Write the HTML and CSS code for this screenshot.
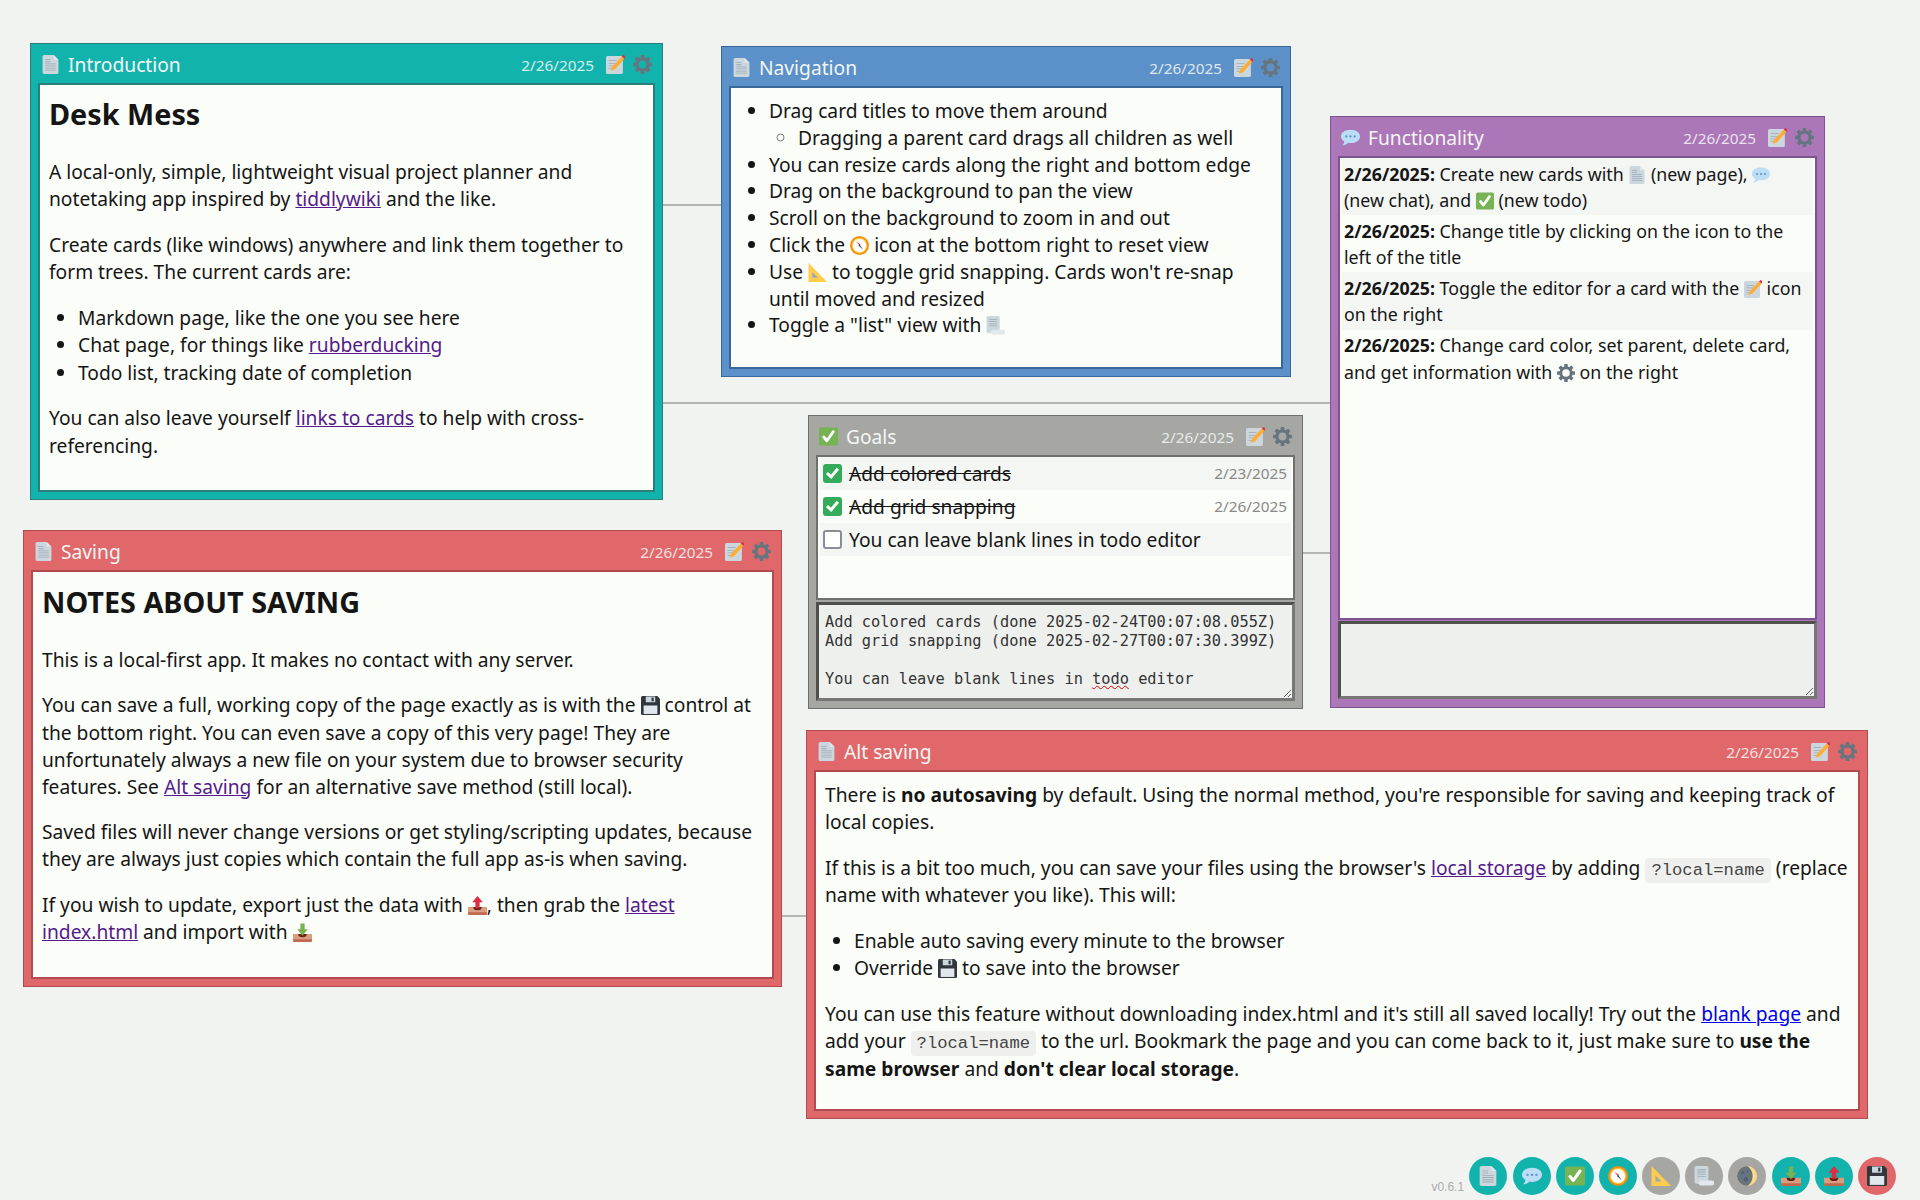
FILE: index.html
```html
<!DOCTYPE html>
<html lang="en">
<head>
  <meta charset="UTF-8" />
  <meta name="viewport" content="width=device-width, initial-scale=1.0"/>
  <title>Desk Mess</title>
  <link rel="stylesheet" href="styles.css">
</head>
<body>
  <svg class="defs" width="0" height="0" aria-hidden="true">
    <symbol id="i-page" viewBox="0 0 36 36">
      <path fill="#ccd6dd" d="M6 0h18l9 9v24a3 3 0 0 1-3 3H6a3 3 0 0 1-3-3V3a3 3 0 0 1 3-3z"/>
      <path fill="#e1e8ed" d="M24 0l9 9h-7a2 2 0 0 1-2-2z"/>
      <path fill="#99aab5" d="M8 12h10v1.500H8zM8 16h20v1.500H8zM8 20h20v1.500H8zM8 24h20v1.500H8zM8 28h20v1.500H8zM8 8h10v1.500H8z"/>
    </symbol>
    <symbol id="i-chat" viewBox="1 1 34 34">
      <path fill="#bbddf5" d="M18 4C8 4 1 9 1 16c0 4 2.500 7 6 9-.5 3-2 5.500-4 7 4 .5 8-1.500 11-4.500 1.300.3 2.600.5 4 .5 10 0 17-5 17-12S28 4 18 4z"/>
      <circle fill="#5b93c9" cx="10.500" cy="16" r="2"/><circle fill="#5b93c9" cx="18" cy="16" r="2"/><circle fill="#5b93c9" cx="25.500" cy="16" r="2"/>
    </symbol>
    <symbol id="i-check" viewBox="0 0 36 36">
      <rect fill="#77b255" y="1" width="36" height="34" rx="3"/>
      <path fill="none" stroke="#fff" stroke-width="5.500" stroke-linecap="round" stroke-linejoin="round" d="M9 19l6 7L27 9"/>
    </symbol>
    <symbol id="i-compass" viewBox="0 0 36 36">
      <circle fill="#f4900c" cx="18" cy="18" r="18"/>
      <circle fill="#ffcc4d" cx="18" cy="18" r="14.500"/>
      <circle fill="#fff" cx="18" cy="18" r="12.500"/>
      <path fill="#dd2e44" d="M11 10l9 6-2 2z"/>
      <path fill="#31373d" d="M25 26l-9-8 2-2z"/>
    </symbol>
    <symbol id="i-ruler" viewBox="0 0 36 36">
      <path fill="#ffcc4d" d="M1 0v36h35z"/>
      <path fill="#99aab5" d="M8 17v11h11z"/>
    </symbol>
    <symbol id="i-scroll" viewBox="0 0 36 36">
      <path fill="#ccd6dd" d="M1 3a3 3 0 0 1 3-3h19a3 3 0 0 1 3 3v29H4a3 3 0 0 1-3-3z"/>
      <path fill="#e1e8ed" d="M11 26h21a4.500 4.500 0 0 1 0 9H12a5 5 0 0 1-4-4z"/>
      <path fill="#99aab5" d="M6 6h15v1.500H6zM6 10h15v1.500H6zM6 14h15v1.500H6zM6 18h15v1.500H6z"/>
    </symbol>
    <symbol id="i-moon" viewBox="0 0 36 36">
      <circle fill="#ffd983" cx="18" cy="18" r="18"/>
      <path fill="#66757f" d="M18 0a18 18 0 0 0 0 36c6-3 10-10 10-18S24 3 18 0z"/>
      <circle fill="#55606e" cx="10" cy="12" r="3"/><circle fill="#55606e" cx="16" cy="24" r="4"/><circle fill="#55606e" cx="19" cy="10" r="2"/>
    </symbol>
    <symbol id="i-import" viewBox="0 0 36 36">
      <path fill="#d99e82" d="M0 21h36v12a3 3 0 0 1-3 3H3a3 3 0 0 1-3-3z"/>
      <path fill="#c1694f" d="M0 31h36v2a3 3 0 0 1-3 3H3a3 3 0 0 1-3-3z"/>
      <path fill="#662113" d="M10 21h16a8 6 0 0 1-16 0z"/>
      <path fill="#77b255" d="M14 1h8v11h6L18 24 8 12h6z"/>
    </symbol>
    <symbol id="i-export" viewBox="0 0 36 36">
      <path fill="#d99e82" d="M0 21h36v12a3 3 0 0 1-3 3H3a3 3 0 0 1-3-3z"/>
      <path fill="#c1694f" d="M0 31h36v2a3 3 0 0 1-3 3H3a3 3 0 0 1-3-3z"/>
      <path fill="#662113" d="M10 21h16a8 6 0 0 1-16 0z"/>
      <path fill="#dd2e44" d="M18 0l10 12h-6v11h-8V12H8z"/>
    </symbol>
    <symbol id="i-save" viewBox="0 0 36 36">
      <path fill="#31373d" d="M3 0h28l5 5v28a3 3 0 0 1-3 3H3a3 3 0 0 1-3-3V3a3 3 0 0 1 3-3z"/>
      <rect fill="#ccd6dd" x="9" y="1" width="18" height="11" rx="1"/>
      <rect fill="#31373d" x="20" y="3" width="4" height="7"/>
      <rect fill="#e1e8ed" x="5" y="18" width="26" height="16"/>
    </symbol>
    <symbol id="i-memo" viewBox="0 0 36 36">
      <rect fill="#ccd6dd" x="0" y="2" width="32" height="34" rx="3"/>
      <path fill="#99aab5" d="M5 10h15v1.500H5zM5 15h15v1.500H5zM5 20h10v1.500H5zM5 25h6v1.500H5z"/>
      <path fill="#ffac33" d="M30 3l5 4-18 20-8 3 3-8z"/>
      <path fill="#dd2e44" d="M30 3l2-2a2 2 0 0 1 3 0l1 2a2 2 0 0 1 0 2l-1 2z"/>
    </symbol>
    <symbol id="i-gear" viewBox="0 0 36 36">
      <circle cx="18" cy="18" r="10.500" fill="none" stroke="#66757f" stroke-width="6"/>
      <g fill="#66757f">
        <rect x="14.500" y="0" width="7" height="8" rx="1"/>
        <rect x="14.500" y="28" width="7" height="8" rx="1"/>
        <rect x="0" y="14.500" width="8" height="7" rx="1"/>
        <rect x="28" y="14.500" width="8" height="7" rx="1"/>
        <rect x="14.500" y="0" width="7" height="8" rx="1" transform="rotate(45 18 18)"/>
        <rect x="14.500" y="28" width="7" height="8" rx="1" transform="rotate(45 18 18)"/>
        <rect x="0" y="14.500" width="8" height="7" rx="1" transform="rotate(45 18 18)"/>
        <rect x="28" y="14.500" width="8" height="7" rx="1" transform="rotate(45 18 18)"/>
      </g>
    </symbol>
  </svg>

  <div class="canvas">
    <div class="link link-intro-nav"></div>
    <div class="link link-intro-func"></div>
    <div class="link link-goals-func"></div>
    <div class="link link-saving-alt"></div>

    <section class="card card-teal card-intro">
      <header class="card-head">
        <svg class="head-icon"><use href="#i-page"/></svg>
        <span class="card-title">Introduction</span>
        <span class="card-date">2/26/2025</span>
        <svg class="head-btn"><use href="#i-memo"/></svg>
        <svg class="head-btn"><use href="#i-gear"/></svg>
      </header>
      <div class="card-body">
        <h1>Desk Mess</h1>
        <p>A local-only, simple, lightweight visual project planner and notetaking app inspired by <a href="#">tiddlywiki</a> and the like.</p>
        <p>Create cards (like windows) anywhere and link them together to form trees. The current cards are:</p>
        <ul>
          <li>Markdown page, like the one you see here</li>
          <li>Chat page, for things like <a href="#">rubberducking</a></li>
          <li>Todo list, tracking date of completion</li>
        </ul>
        <p>You can also leave yourself <a href="#">links to cards</a> to help with cross-referencing.</p>
      </div>
    </section>

    <section class="card card-blue card-nav">
      <header class="card-head">
        <svg class="head-icon"><use href="#i-page"/></svg>
        <span class="card-title">Navigation</span>
        <span class="card-date">2/26/2025</span>
        <svg class="head-btn"><use href="#i-memo"/></svg>
        <svg class="head-btn"><use href="#i-gear"/></svg>
      </header>
      <div class="card-body">
        <ul>
          <li>Drag card titles to move them around
            <ul><li>Dragging a parent card drags all children as well</li></ul>
          </li>
          <li>You can resize cards along the right and bottom edge</li>
          <li>Drag on the background to pan the view</li>
          <li>Scroll on the background to zoom in and out</li>
          <li>Click the <svg class="emoji"><use href="#i-compass"/></svg> icon at the bottom right to reset view</li>
          <li>Use <svg class="emoji"><use href="#i-ruler"/></svg> to toggle grid snapping. Cards won't re-snap until moved and resized</li>
          <li>Toggle a "list" view with <svg class="emoji"><use href="#i-scroll"/></svg></li>
        </ul>
      </div>
    </section>

    <section class="card card-purple card-func">
      <header class="card-head">
        <svg class="head-icon"><use href="#i-chat"/></svg>
        <span class="card-title">Functionality</span>
        <span class="card-date">2/26/2025</span>
        <svg class="head-btn"><use href="#i-memo"/></svg>
        <svg class="head-btn"><use href="#i-gear"/></svg>
      </header>
      <div class="card-body card-list">
        <div class="chat-row"><b>2/26/2025:</b> Create new cards with <svg class="emoji"><use href="#i-page"/></svg> (new page), <svg class="emoji"><use href="#i-chat"/></svg> (new chat), and <svg class="emoji"><use href="#i-check"/></svg> (new todo)</div>
        <div class="chat-row"><b>2/26/2025:</b> Change title by clicking on the icon to the left of the title</div>
        <div class="chat-row"><b>2/26/2025:</b> Toggle the editor for a card with the <svg class="emoji"><use href="#i-memo"/></svg> icon on the right</div>
        <div class="chat-row"><b>2/26/2025:</b> Change card color, set parent, delete card, and get information with <svg class="emoji"><use href="#i-gear"/></svg> on the right</div>
      </div>
      <textarea class="editor chat-input"></textarea>
    </section>

    <section class="card card-grey card-goals">
      <header class="card-head">
        <svg class="head-icon"><use href="#i-check"/></svg>
        <span class="card-title">Goals</span>
        <span class="card-date">2/26/2025</span>
        <svg class="head-btn"><use href="#i-memo"/></svg>
        <svg class="head-btn"><use href="#i-gear"/></svg>
      </header>
      <div class="card-body card-list">
        <label class="todo-row"><input type="checkbox" checked><s>Add colored cards</s><span class="todo-date">2/23/2025</span></label>
        <label class="todo-row"><input type="checkbox" checked><s>Add grid snapping</s><span class="todo-date">2/26/2025</span></label>
        <label class="todo-row"><input type="checkbox"><span>You can leave blank lines in todo editor</span></label>
      </div>
      <div class="editor todo-editor">Add colored cards (done 2025-02-24T00:07:08.055Z)
Add grid snapping (done 2025-02-27T00:07:30.399Z)

You can leave blank lines in <span class="typo">todo</span> editor</div>
    </section>

    <section class="card card-red card-saving">
      <header class="card-head">
        <svg class="head-icon"><use href="#i-page"/></svg>
        <span class="card-title">Saving</span>
        <span class="card-date">2/26/2025</span>
        <svg class="head-btn"><use href="#i-memo"/></svg>
        <svg class="head-btn"><use href="#i-gear"/></svg>
      </header>
      <div class="card-body">
        <h1>NOTES ABOUT SAVING</h1>
        <p>This is a local-first app. It makes no contact with any server.</p>
        <p>You can save a full, working copy of the page exactly as is with the <svg class="emoji"><use href="#i-save"/></svg> control at the bottom right. You can even save a copy of this very page! They are unfortunately always a new file on your system due to browser security features. See <a href="#">Alt saving</a> for an alternative save method (still local).</p>
        <p>Saved files will never change versions or get styling/scripting updates, because they are always just copies which contain the full app as-is when saving.</p>
        <p>If you wish to update, export just the data with <svg class="emoji"><use href="#i-export"/></svg>, then grab the <a href="#">latest index.html</a> and import with <svg class="emoji"><use href="#i-import"/></svg></p>
      </div>
    </section>

    <section class="card card-red card-alt">
      <header class="card-head">
        <svg class="head-icon"><use href="#i-page"/></svg>
        <span class="card-title">Alt saving</span>
        <span class="card-date">2/26/2025</span>
        <svg class="head-btn"><use href="#i-memo"/></svg>
        <svg class="head-btn"><use href="#i-gear"/></svg>
      </header>
      <div class="card-body">
        <p>There is <b>no autosaving</b> by default. Using the normal method, you're responsible for saving and keeping track of local copies.</p>
        <p>If this is a bit too much, you can save your files using the browser's <a href="#">local storage</a> by adding <code>?local=name</code> (replace name with whatever you like). This will:</p>
        <ul>
          <li>Enable auto saving every minute to the browser</li>
          <li>Override <svg class="emoji"><use href="#i-save"/></svg> to save into the browser</li>
        </ul>
        <p>You can use this feature without downloading index.html and it's still all saved locally! Try out the <a class="fresh" href="#">blank page</a> and add your <code>?local=name</code> to the url. Bookmark the page and you can come back to it, just make sure to <b>use the same browser</b> and <b>don't clear local storage</b>.</p>
      </div>
    </section>

    <footer class="toolbar">
      <span class="version">v0.6.1</span>
      <button class="tool"><svg><use href="#i-page"/></svg></button>
      <button class="tool"><svg><use href="#i-chat"/></svg></button>
      <button class="tool"><svg><use href="#i-check"/></svg></button>
      <button class="tool"><svg><use href="#i-compass"/></svg></button>
      <button class="tool tool-off"><svg><use href="#i-ruler"/></svg></button>
      <button class="tool tool-off"><svg><use href="#i-scroll"/></svg></button>
      <button class="tool tool-off"><svg><use href="#i-moon"/></svg></button>
      <button class="tool"><svg><use href="#i-import"/></svg></button>
      <button class="tool"><svg><use href="#i-export"/></svg></button>
      <button class="tool tool-save"><svg><use href="#i-save"/></svg></button>
    </footer>
  </div>
</body>
</html>
```

FILE: styles.css
```css
html, body {
  margin: 0;
  height: 100%;
}
body {
  font-family: "Noto Sans", sans-serif;
  font-size: 19.22px;
  line-height: 27.3px;
  color: #151515;
  background: #f1f3f1;
  overflow: hidden;
}
.defs {
  position: absolute;
}
.canvas {
  position: relative;
  width: 1920px;
  height: 1200px;
}

/* lines between parent and child cards */
.link {
  position: absolute;
  height: 2px;
  background: #b5b6b3;
}
.link-intro-nav { left: 663px; top: 204px; width: 60px; }
.link-intro-func { left: 663px; top: 402px; width: 670px; }
.link-goals-func { left: 1303px; top: 552px; width: 30px; }
.link-saving-alt { left: 782px; top: 915px; width: 26px; }

/* cards sit on a free canvas */
.card {
  position: absolute;
  box-sizing: border-box;
  display: flex;
  flex-direction: column;
  padding: 0 7px 7px;
  border: 1px solid var(--edge);
  background: var(--fill);
}
.card-teal { --fill: #12b3ac; --edge: #2b7f7b; }
.card-blue { --fill: #5b91c8; --edge: #38689b; }
.card-purple { --fill: #ab77b8; --edge: #7c5490; }
.card-grey { --fill: #a6a7a3; --edge: #6f706d; }
.card-red { --fill: #e0686b; --edge: #ae4c4f; }

.card-intro { left: 30px; top: 43px; width: 633px; height: 457px; }
.card-nav { left: 721px; top: 46px; width: 570px; height: 331px; }
.card-func { left: 1330px; top: 116px; width: 495px; height: 592px; }
.card-goals { left: 808px; top: 415px; width: 495px; height: 294px; }
.card-saving { left: 23px; top: 530px; width: 759px; height: 457px; }
.card-alt { left: 806px; top: 730px; width: 1062px; height: 389px; }

.card-head {
  flex: none;
  box-sizing: border-box;
  height: 39px;
  display: flex;
  align-items: center;
  gap: 8px;
  padding: 2px 3px 0;
  color: #f4f6f4;
}
.head-icon {
  width: 19px;
  height: 19px;
}
.card-title {
  flex: 1;
}
.card-date {
  font-size: 15.3px;
  opacity: 0.85;
  margin: 2px 4px 0 0;
}
.head-btn {
  width: 19px;
  height: 19px;
}

.card-body {
  box-sizing: border-box;
  flex: 1;
  min-height: 0;
  overflow: hidden;
  padding: 0 9px;
  background: #fbfdf8;
  border: 2px solid var(--edge);
}
.card-body h1 {
  font-size: 28.8px;
  line-height: 38px;
  margin: 10px 0 25px;
}
.card-body p {
  margin: 18.400px 0;
}
.card-body ul {
  margin: 18.400px 0;
  padding-left: 29px;
}
.card-body li ul {
  margin: 0;
}
.card-body li li::marker {
  color: #777;
}
.card-nav .card-body {
  padding-top: 10px;
  line-height: 26.8px;
}
.card-nav .card-body > ul {
  margin: 0;
}
.card-alt .card-body p:first-child {
  margin-top: 9px;
}
.card-saving .card-body {
  line-height: 27.1px;
}
.card-saving .card-body h1 {
  margin-top: 11px;
}
a {
  color: #551a8b;
}
a.fresh {
  color: #0000ee;
}
code {
  font-family: "Liberation Mono", monospace;
  font-size: 17.2px;
  line-height: 1;
  padding: 3px 6px;
  border-radius: 4px;
  color: #444;
  background: #eff0ee;
}
.emoji {
  width: 19px;
  height: 19px;
  vertical-align: -3px;
}

/* chat and todo rows */
.card-list {
  padding: 0 2px;
}
.chat-row {
  padding: 2.500px 4px 1.500px 2px;
  font-size: 17.8px;
  line-height: 26.6px;
}
.chat-row .emoji {
  width: 18px;
  height: 18px;
}
.chat-row:nth-child(odd), .todo-row:nth-child(odd) {
  background: #f4f6f3;
}
.card-goals .card-list {
  flex: none;
  height: 145px;
}
.todo-row {
  display: flex;
  align-items: center;
  height: 33px;
  padding: 0 4px 0 3px;
  gap: 7px;
}
.todo-row input {
  appearance: none;
  box-sizing: border-box;
  position: relative;
  flex: none;
  width: 19px;
  height: 19px;
  margin: 0;
  border: 2px solid #8b8b9b;
  border-radius: 3px;
  background: #fff;
}
.todo-row input:checked {
  background: #34ab5b;
  border-color: #34ab5b;
}
.todo-row input:checked::after {
  content: "";
  position: absolute;
  left: 4px;
  top: 0;
  width: 4px;
  height: 9px;
  border: solid #fff;
  border-width: 0 3px 3px 0;
  transform: rotate(40deg);
}
.todo-date {
  margin-left: auto;
  font-size: 15.3px;
  color: #888;
}

.editor {
  flex: 1;
  box-sizing: border-box;
  min-height: 0;
  margin: 2px 0 0;
  padding: 7.500px 6px 5px;
  border: 3px solid;
  border-color: #4f504c #777875 #777875 #4f504c;
  background: #eef0ee;
  font-family: "DejaVu Sans Mono", monospace;
  font-size: 15.3px;
  line-height: 19px;
  color: #333;
  white-space: pre;
  overflow: auto;
  resize: both;
}
.chat-input {
  flex: none;
  height: 78px;
  width: 100%;
  margin-top: 1px;
  resize: vertical;
}
.card-func {
  padding-bottom: 8px;
}
.typo {
  text-decoration: underline wavy #e00000 1px;
}

/* bottom right buttons */
.toolbar {
  position: absolute;
  right: 24px;
  bottom: 5px;
  display: flex;
  align-items: center;
  gap: 5.2px;
}
.version {
  align-self: flex-end;
  font-family: "Liberation Sans", sans-serif;
  font-size: 12px;
  line-height: 16px;
  color: #aaaca9;
}
.tool {
  width: 38px;
  height: 38px;
  padding: 9px;
  border: 0;
  border-radius: 50%;
  background: #12b3ac;
}
.tool svg {
  display: block;
  width: 20px;
  height: 20px;
}
.tool-off {
  background: #a6a7a3;
}
.tool-save {
  background: #e0686b;
}
```
